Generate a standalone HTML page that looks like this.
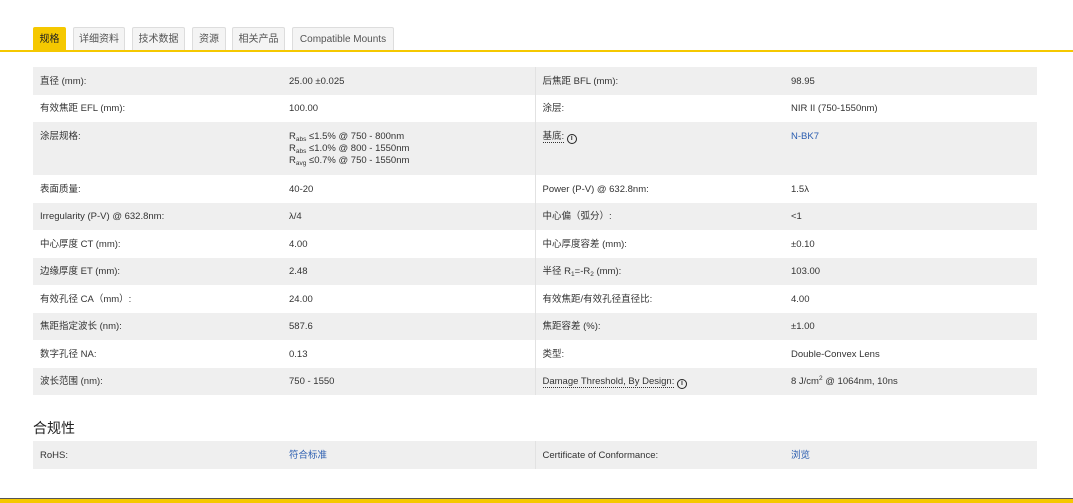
<!DOCTYPE html>
<html><head><meta charset="utf-8"><style>
body{margin:0;width:1073px;height:503px;background:#fff;font-family:"Liberation Sans","Noto Sans CJK SC",sans-serif;font-size:9.5px;color:#333;position:relative;overflow:hidden}
.tab{position:absolute;top:27px;height:23px;line-height:24px;font-size:10px;text-align:center;background:#f4f4f4;border:1px solid #ddd;border-bottom:none;box-sizing:border-box;color:#555;border-radius:2px 2px 0 0}
.tab.act{background:#f5c800;border-color:#f5c800;color:#222}
.line{position:absolute;top:50px;left:0;width:1073px;height:2px;background:#f5c800}
table{position:absolute;left:33px;border-collapse:collapse;width:1004px;table-layout:fixed}
td{padding:2px 7px 0;height:27.5px;line-height:12px;vertical-align:middle;box-sizing:border-box;white-space:nowrap}
td.c1{width:249px}td.c2{width:253px;border-right:1px solid #e2e2e2}td.c3{width:249px}
tr.g td{background:#efefef}
.blue{color:#2a5db0}
sub,sup{font-size:6.5px;line-height:0}
sub{vertical-align:-2px}
.u{border-bottom:1px dotted #333}
.i{display:inline-block;width:8px;height:8px;border:1.3px solid #222;border-radius:50%;font-size:7px;line-height:8px;text-align:center;font-weight:bold;vertical-align:-1px}
h3{position:absolute;left:33px;top:418px;margin:0;font-size:14px;font-weight:normal;color:#222}
</style></head><body>
<div class="tab act" style="left:33px;width:33px">规格</div>
<div class="tab" style="left:73px;width:52px">详细资料</div>
<div class="tab" style="left:132px;width:53px">技术数据</div>
<div class="tab" style="left:192px;width:34px">资源</div>
<div class="tab" style="left:232px;width:53px">相关产品</div>
<div class="tab" style="left:292px;width:102px">Compatible Mounts</div>
<div class="line"></div>
<table style="top:67px">
<tr class="g"><td class="c1">直径 (mm):</td><td class="c2">25.00 ±0.025</td><td class="c3">后焦距 BFL (mm):</td><td>98.95</td></tr>
<tr><td class="c1">有效焦距 EFL (mm):</td><td class="c2">100.00</td><td class="c3">涂层:</td><td>NIR II (750-1550nm)</td></tr>
<tr class="g"><td class="c1" style="height:53px;vertical-align:top;padding-top:9px">涂层规格:</td><td class="c2" style="vertical-align:top;padding-top:9px;line-height:12px">R<sub>abs</sub> ≤1.5% @ 750 - 800nm<br>R<sub>abs</sub> ≤1.0% @ 800 - 1550nm<br>R<sub>avg</sub> ≤0.7% @ 750 - 1550nm</td><td class="c3" style="vertical-align:top;padding-top:9px"><span class="u">基底:</span> <span class="i">i</span></td><td class="blue" style="vertical-align:top;padding-top:9px">N-BK7</td></tr>
<tr><td class="c1">表面质量:</td><td class="c2">40-20</td><td class="c3">Power (P-V) @ 632.8nm:</td><td>1.5λ</td></tr>
<tr class="g"><td class="c1">Irregularity (P-V) @ 632.8nm:</td><td class="c2">λ/4</td><td class="c3">中心偏（弧分）:</td><td>&lt;1</td></tr>
<tr><td class="c1">中心厚度 CT (mm):</td><td class="c2">4.00</td><td class="c3">中心厚度容差 (mm):</td><td>±0.10</td></tr>
<tr class="g"><td class="c1">边缘厚度 ET (mm):</td><td class="c2">2.48</td><td class="c3">半径 R<sub>1</sub>=-R<sub>2</sub> (mm):</td><td>103.00</td></tr>
<tr><td class="c1">有效孔径 CA（mm）:</td><td class="c2">24.00</td><td class="c3">有效焦距/有效孔径直径比:</td><td>4.00</td></tr>
<tr class="g"><td class="c1">焦距指定波长 (nm):</td><td class="c2">587.6</td><td class="c3">焦距容差 (%):</td><td>±1.00</td></tr>
<tr><td class="c1">数字孔径 NA:</td><td class="c2">0.13</td><td class="c3">类型:</td><td>Double-Convex Lens</td></tr>
<tr class="g"><td class="c1">波长范围 (nm):</td><td class="c2">750 - 1550</td><td class="c3"><span class="u">Damage Threshold, By Design:</span> <span class="i">i</span></td><td>8 J/cm<sup>2</sup> @ 1064nm, 10ns</td></tr>
</table>
<h3>合规性</h3>
<table style="top:441px">
<tr class="g"><td class="c1" style="height:26px">RoHS:</td><td class="c2 blue">符合标准</td><td class="c3">Certificate of Conformance:</td><td class="blue">浏览</td></tr>
</table>
<div style="position:absolute;left:0;top:498px;width:1073px;height:1px;background:#555"></div>
<div style="position:absolute;left:0;top:499px;width:1073px;height:4px;background:#f5c800"></div>
</body></html>
